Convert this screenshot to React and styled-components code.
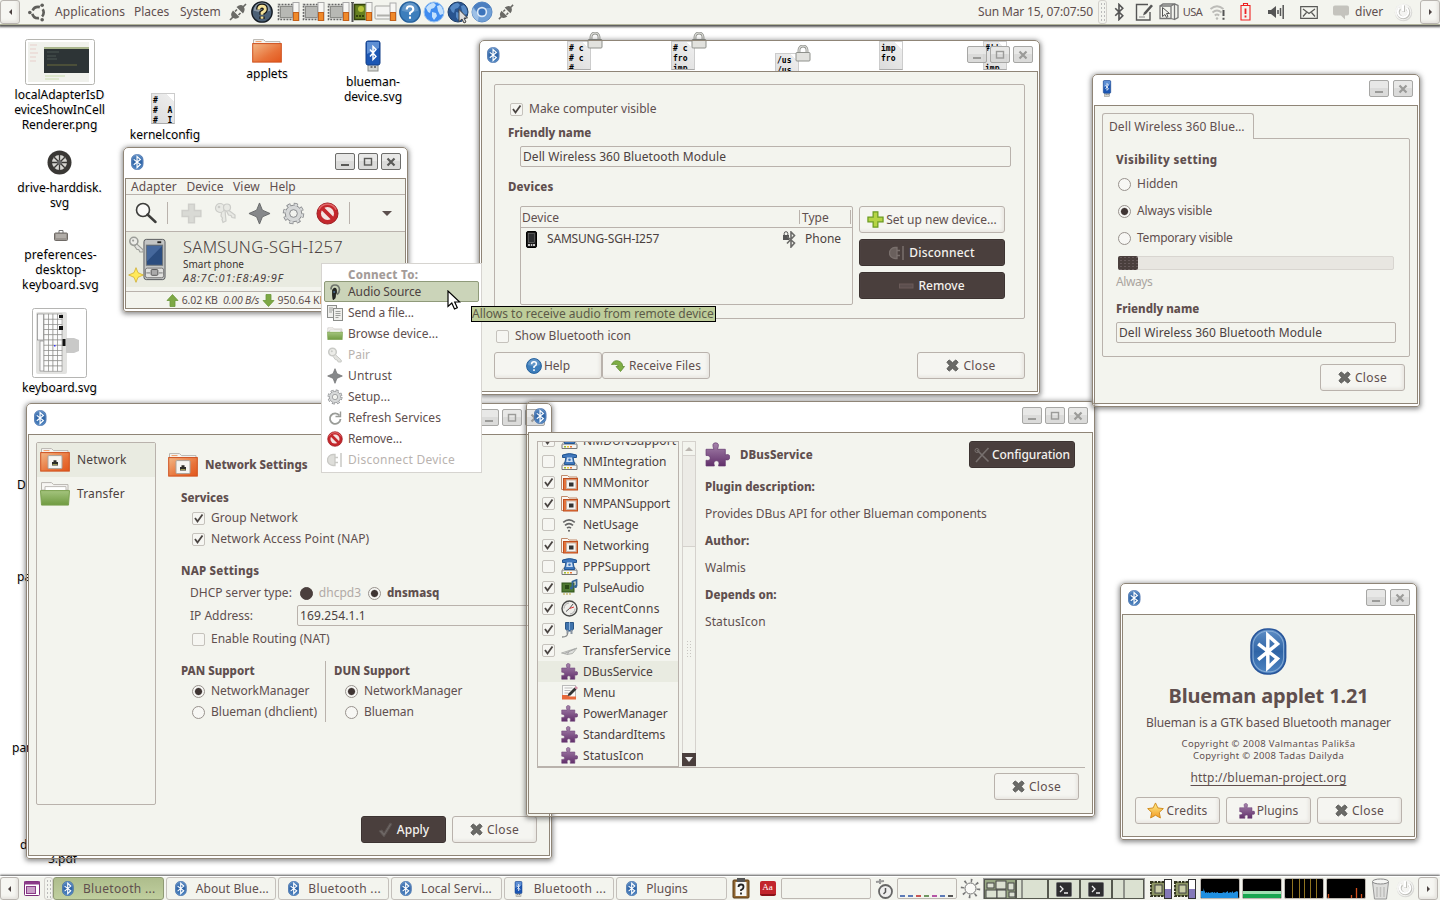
import React from 'react';
import styled, { createGlobalStyle, css } from 'styled-components';

const C = {
  bg: '#f3f4ee',
  text: '#604f4e',
  field: '#4b4140',
  line: '#b9b2ac',
  frame: '#8f8577',
  sel: '#e9ebe1',
  dark: '#4a3f3d',
};

const Global = createGlobalStyle`
  * { box-sizing: border-box; }
  html, body { margin: 0; padding: 0; background: #fff; }
  body { font: 12px/16px "Noto Sans", "Open Sans", sans-serif; color: ${C.text}; overflow: hidden; }
  svg { display: block; flex: none; }
`;

const Screen = styled.div`
  position: relative; width: 1440px; height: 900px; overflow: hidden; background: #fff;
  display: flex; flex-direction: column; justify-content: space-between;
`;
const Surface = styled.div`position: absolute; inset: 0;`;

const T = styled.span`
  white-space: pre;
  ${p => p.$ls && css`letter-spacing: ${p.$ls}px;`}
  ${p => p.$size && css`font-size: ${p.$size}px;`}
  ${p => p.$color && css`color: ${p.$color};`}
  ${p => p.$italic && css`font-style: italic;`}
`;
const B = styled(T)`font-weight: 800; font-size: 11.5px;`;

/* ---------- icons ---------- */
const RUNE = 'M7 7l10 10-5 5V2l5 5L7 17';
const Icon = ({ w = 16, h = w, vb = `0 0 ${w} ${h}`, children }) => <svg width={w} height={h} viewBox={vb}>{children}</svg>;

const BtLogo = ({ h = 16 }) => (
  <Icon w={h * 0.78} h={h} vb="0 0 36 46">
    <defs><linearGradient id="bt" x1="0" y1="0" x2="0" y2="1"><stop offset="0" stopColor="#5f8fc6" /><stop offset=".5" stopColor="#2f64a6" /><stop offset="1" stopColor="#4f86c2" /></linearGradient></defs>
    <rect x="1" y="1" width="34" height="44" rx="16" fill="url(#bt)" stroke="#28559a" strokeWidth="1.500" />
    <rect x="3" y="3" width="30" height="40" rx="14" fill="none" stroke="#86abd6" strokeWidth="1" />
    <path d="M8 15.500L27 30 17.500 39V7L27 15.500 8 31" fill="none" stroke="#fff" strokeWidth="3.400" />
  </Icon>
);
const Usb = ({ w = 10, h = 17 }) => (
  <Icon w={w} h={h} vb="0 0 16 32">
    <rect x="3" y="24" width="10" height="7" fill="#d5d6d2" stroke="#8d8f8a" />
    <path d="M5.500 27h2M9 27h2" stroke="#555" strokeWidth="1.500" />
    <rect x="1" y="1" width="14" height="24" rx="2" fill="#1c57b4" stroke="#123f87" />
    <path d="M2 2h12v6L2 14z" fill="#5e8fd4" />
    <path d="M5 9.500l6 7-3 3V6.500l3 3-6 7" fill="none" stroke="#fff" strokeWidth="1.400" />
  </Icon>
);
const Rune = ({ s = 18, color = '#555', sw = 2.2 }) => <Icon w={s} vb="0 0 24 24"><path d={RUNE} fill="none" stroke={color} strokeWidth={sw} /></Icon>;
const XMark = ({ color = '#4f4f4d' }) => (
  <Icon w={13} vb="0 0 14 14"><path d="M1 3.500L3.500 1 7 4l3.500-3L13 3.500 10 7l3 3.500L10.500 13 7 10l-3.500 3L1 10.500 4 7z" fill="#6a6a67" stroke={color} /></Icon>
);
const Check = ({ s = 13, color = '#4a4542' }) => <Icon w={s} vb="0 0 13 13"><path d="M3 6l2.500 3.500L10.500 2.500" fill="none" stroke={color} strokeWidth="1.800" /></Icon>;
const BigCheck = () => <Icon w={15} h={16}><path d="M1 9l3-1 2 3L12 1l2 1-8 13z" fill="#6d6664" stroke="#5a5250" /></Icon>;
const HelpBall = ({ s = 16, dark }) => (
  <Icon w={s} vb="0 0 16 16">
    <circle cx="8" cy="8" r="7.400" fill={dark ? '#4b6076' : '#3d7ebc'} stroke={dark ? '#151c24' : '#25609c'} />
    <path d="M2 7a6 6 0 0 1 12 0q-6 2-12 0z" fill="#fff" opacity={dark ? 0.35 : 0.18} />
    {dark && <path d="M5.600 6.200Q5.600 3.800 8 3.800T10.400 6Q10.400 7.300 8 8.600V10M8 11.300v1.800" fill="none" stroke="#151515" strokeWidth="3.800" />}
    <path d="M5.600 6.200Q5.600 3.800 8 3.800T10.400 6Q10.400 7.300 8 8.600V10M8 11.300v1.600" fill="none" stroke={dark ? '#f5e39a' : '#fff'} strokeWidth={dark ? 2 : 1.5} />
  </Icon>
);
const Plus = ({ s = 17, off }) => <Icon w={s} vb="0 0 18 18"><path d="M6.500 1h5v5.500H17v5h-5.500V17h-5v-5.500H1v-5h5.500z" fill={off ? '#d9dad5' : '#b5d445'} stroke={off ? '#cfcfcb' : '#6a9a1f'} strokeWidth="1.300" /></Icon>;
const Forbid = ({ s = 16 }) => (
  <Icon w={s} vb="0 0 24 24"><circle cx="12" cy="12" r="11" fill="#c4272c" stroke="#9b1b20" /><circle cx="12" cy="12" r="6.800" fill="#f3e4e2" /><path d="M6 6l12 12" stroke="#c4272c" strokeWidth="4" /><path d="M3 8a10 10 0 0 1 18 0" fill="none" stroke="#e2686a" strokeWidth="1.500" /></Icon>
);
const Gear = ({ s = 16 }) => (
  <Icon w={s} vb="0 0 24 24">
    <circle cx="12" cy="12" r="9.400" fill="none" stroke="#85878a" strokeWidth="3.600" strokeDasharray="4.100 3.280" />
    <circle cx="12" cy="12" r="8.600" fill="#d6d8d8" stroke="#85878a" />
    <circle cx="12" cy="12" r="9.200" fill="none" stroke="#d6d8d8" strokeWidth="2.400" strokeDasharray="2.800 4.420" strokeDashoffset="-.7" />
    <circle cx="12" cy="12" r="4" fill="#f1f2ee" stroke="#85878a" />
  </Icon>
);
const Star4 = ({ s = 16, fill = '#86888a', stroke = '#66686a' }) => <Icon w={s} vb="0 0 24 24"><path d="M12 1l3 7.500L23 12l-8 3.500L12 23l-3-7.500L1 12l8-3.500z" fill={fill} stroke={stroke} /></Icon>;
const Key = ({ s = 16, color = '#c9cac6' }) => <Icon w={s} vb="0 0 16 16"><circle cx="5.500" cy="5" r="3.800" fill="#ecece8" stroke={color} strokeWidth="1.500" /><circle cx="4.800" cy="4.300" r="1" fill={color} /><path d="M8.200 7.500l6 5.500v2h-3l-1-2-2-.5-2-3z" fill="#e3e3df" stroke={color} /></Icon>;
const Keys = () => <Icon w={22} vb="0 0 22 22"><g fill="#e8e9e4" stroke="#cbccc8" strokeWidth="1.200"><path d="M8 7l3 1 1 11-3 1.500-1-3 .5-1.500-1.500-2z" /><circle cx="6" cy="6" r="4.500" /><path d="M13 7l8 6v3l-3-.5-1-2-2.500-.5-2-4z" /><circle cx="13" cy="5.500" r="3.500" /></g><circle cx="5" cy="5" r="1.300" fill="#cbccc8" /></Icon>;
const Search = () => <Icon w={22} vb="0 0 22 22"><circle cx="8" cy="8" r="6.500" fill="#fafaf8" stroke="#3d3d3b" strokeWidth="1.600" /><path d="M12.500 12.500l8 7.500" stroke="#3d3d3b" strokeWidth="2.400" strokeLinecap="round" /></Icon>;
const Arrow = ({ down }) => <Icon w={13} h={13}><path d={down ? 'M6.500 12.500L1 6.500h3v-6h5v6h3z' : 'M6.500.5L12 6.500H9v6H4v-6H1z'} fill="#7da845" stroke="#6b983a" strokeWidth=".8" /></Icon>;
const Folder = ({ w = 30, net, green }) => (
  <Icon w={w} h={w * 0.84} vb="0 0 30 25">
    <defs><linearGradient id="of" x1="0" y1="0" x2="1" y2="1"><stop offset="0" stopColor="#f2b887" /><stop offset=".6" stopColor="#e8733a" /><stop offset="1" stopColor="#e2561c" /></linearGradient>
      <linearGradient id="gf" x1="0" y1="0" x2="0" y2="1"><stop offset="0" stopColor="#a4c47e" /><stop offset="1" stopColor="#6f9a40" /></linearGradient></defs>
    <path d="M1.500 9V1.500h10l2 2H28V9z" fill="#f7f6f3" stroke="#b9b6b0" />
    {green ? <><path d="M5 10V5.500h21V10" fill="#fff" stroke="#bdbab5" /><path d="M.5 9.500h29L28.500 24H1.500z" fill="url(#gf)" stroke="#7ba04f" /></>
      : <><path d="M3.500 3.500h6" stroke="#ee9b64" /><rect x=".7" y="5.500" width="28.600" height="18.500" fill="url(#of)" stroke="#cf4f1c" /></>}
    {net && <><rect x="8" y="8.500" width="14" height="13" rx="1" fill="#f6f5f2" stroke="#a9a49d" /><path d="M12 18.500v-3.500h1.500v-1.800h3v1.800h1.500v3.500z" fill="#2d2c28" /><path d="M12.500 17.500h5" stroke="#a4a05a" /></>}
  </Icon>
);
const Puzzle = ({ s = 17 }) => (
  <Icon w={s} vb="0 0 24 24">
    <defs><linearGradient id="pz" x1="0" y1="0" x2="0" y2="1"><stop offset="0" stopColor="#a684ac" /><stop offset="1" stopColor="#62306b" /></linearGradient></defs>
    <path d="M1 7h7.500Q6 .8 10.200.8T12 7h7.500v5.500q4.300-1.500 4.300 2T19.500 17v6H13q1.500-5-2-5T9 23H1v-5.500q4 .8 4-2T1 13z" fill="url(#pz)" stroke="#653970" strokeWidth=".7" />
  </Icon>
);
const Star = () => <Icon w={17} vb="0 0 18 18"><defs><linearGradient id="st" x1="0" y1="0" x2="0" y2="1"><stop offset="0" stopColor="#fff08a" /><stop offset="1" stopColor="#f29a24" /></linearGradient></defs><path d="M9 1l2.500 5.300 5.800.7-4.300 4 1.200 5.900L9 14l-5.200 2.900L5 11 .7 7l5.800-.7z" fill="url(#st)" stroke="#d08a1c" /></Icon>;
const Phone = ({ w = 24, h = 44 }) => (
  <Icon w={w} h={h} vb="0 0 24 44">
    <rect x="1" y="1" width="22" height="42" rx="2.500" fill="#c3c5c4" stroke="#55585a" />
    <rect x="3.500" y="7" width="17" height="21" fill="#2b4d7f" stroke="#6f7577" /><path d="M4 8h16L4 24z" fill="#45689c" />
    <rect x="15" y="3" width="4" height="2" fill="#222" />
    <rect x="2.500" y="31" width="19" height="10" rx="2" fill="#dfe0de" stroke="#777" /><rect x="8.500" y="32.500" width="7" height="6" rx="1" fill="#aaa" stroke="#555" />
    <path d="M3.500 36h4M16.500 36h4" stroke="#777" />
  </Icon>
);
const TinyPhone = () => <Icon w={11} h={17}><rect x=".5" y=".5" width="10" height="16" rx="1.500" fill="#1a1a1a" stroke="#000" /><rect x="2.500" y="2.500" width="6" height="9" fill="#2b2d2f" stroke="#777" strokeWidth=".6" /><path d="M2 14h2M4.800 14h1.500M7 14h2" stroke="#fff" strokeWidth="1.500" /></Icon>;
const LockedBt = () => <Icon w={13} h={17}><rect x="0" y="4" width="6" height="5" fill="#555" /><path d="M1.200 4V2.500a1.800 1.800 0 0 1 3.600 0V4" fill="none" stroke="#555" /><path d="M4 5.500l7.500 6.500L8 16V1l3.500 3.500L4 12.500" fill="none" stroke="#6a6a68" strokeWidth="1.600" /></Icon>;
const Plug = ({ s = 18, color = '#6a6a66' }) => (
  <Icon w={s} vb="0 0 18 18">
    <path d="M1 17l4-4M13 5l4-4M8 6.500L6 8.500M11.500 10L9.500 12" stroke={color} strokeWidth="1.700" />
    <path d="M4 7.500l6.500 6.500Q6.500 17 3.500 14.500T4 7.500zM7.500 4l6.500 6.500q3-4 .500-7T7.500 4z" fill={color} />
  </Icon>
);
const Disc = ({ color = '#c9c9c5', fill = '#dededa' }) => <Icon w={16}><path d="M8 2.500H6a5.500 5.500 0 0 0 0 11h2zM8 5.500h3M8 10.500h3M0 8h1" fill={fill} stroke={color} strokeWidth="1.300" /><path d="M14 1v14" stroke={color} strokeWidth="1.500" /></Icon>;
const Curl = () => <Icon w={14} h={14}><path d="M.5 5.500Q3 .5 7.500 2t4 5.500h2L9.500 12.500 5 7.500h2.500Q6.500 4.500.5 5.500z" fill="#7fae45" stroke="#5c8a2c" strokeWidth=".8" /></Icon>;
const Refresh = () => <Icon w={16}><path d="M12.500 5.500A5.300 5.300 0 1 0 13.500 9" fill="none" stroke="#9a9c98" strokeWidth="1.800" /><path d="M13.500 1.500v5h-5" fill="none" stroke="#9a9c98" strokeWidth="1.400" /></Icon>;
const Docs = () => <Icon w={16}><g fill="#efefec" stroke="#8b8d8a"><rect x=".5" y=".5" width="9" height="12" /><rect x="6.500" y="3.500" width="9" height="12" /></g><path d="M2 3h4M2 5h4M2 7h3M8.500 6.500h5M8.500 8.500h5M8.500 10.500h5M8.500 12.500h3" stroke="#9d9f9b" /></Icon>;
const Headset = () => <Icon w={16}><path d="M4 5.500Q4 1 8 1t4.500 4.500q0 3-2.500 5" fill="none" stroke="#6f756c" strokeWidth="1.700" /><path d="M5.500 6q1.500-3 3.500-1.500 1.500 3.500-.5 6.500 0 4.500-2.500 4.500L5.500 11 5.500 6z" fill="#252a26" stroke="#111" strokeWidth=".7" /><circle cx="7.200" cy="8" r="1" fill="#4b6f94" /></Icon>;
const Tools = () => <Icon w={16}><path d="M3 3l11.500 11.500M14.500 1L8.500 7.500 2 15" stroke="#77706e" strokeWidth="1.600" fill="none" /><circle cx="3" cy="3.500" r="2" fill="none" stroke="#77706e" /></Icon>;
const Minus = () => <Icon w={15} h={6}><rect x=".5" y="1" width="13.500" height="4" fill="#5c4f4e" stroke="#6a5b59" /></Icon>;
const Modem = () => (
  <Icon w={17} h={17}>
    <path d="M1 12.500h15v4H1z" fill="#f5f5f2" stroke="#777" /><path d="M1 12.500L3 9.500h11l2 3" fill="#e4e6e4" stroke="#888" strokeWidth=".8" />
    <path d="M1.500 4.500V2Q8.500-.8 15.500 2v2.500h-3.200V6l1.400 5.500H3.300L4.700 6V4.500z" fill="#3f78bd" stroke="#245690" /><path d="M6 4.500h5l.8 4.500H5.200z" fill="#cfe0f3" /><circle cx="8.500" cy="6.800" r="1.300" fill="#3f78bd" />
    <path d="M3 14.700h2" stroke="#9b3" strokeWidth="1.600" /><path d="M6 14.700h2" stroke="#ec3" strokeWidth="1.600" /><path d="M9 14.700h2" stroke="#e73" strokeWidth="1.600" />
  </Icon>
);
const NetFolder = () => (
  <Icon w={17} h={17}>
    <path d="M.5 15.500V1.500h6l1.500 1.500h8v12.500z" fill="#faf6f1" stroke="#c08b6c" />
    <rect x="2.500" y="4.500" width="14" height="11.500" fill="#e4743c" stroke="#c04d1c" />
    <path d="M2.500 4.500v11.500" stroke="#c04d1c" /><rect x="5.500" y="6" width="9.500" height="8.500" fill="#f5f3f0" stroke="#c9b3a5" /><rect x="8" y="8.500" width="4.500" height="4" fill="#333" />
  </Icon>
);
const Wifi = ({ s = 16, color = '#666', warn }) => <Icon w={s} vb="0 0 18 18"><g fill="none" stroke={color} strokeWidth="1.800"><path d="M2.500 6Q9 .5 15.500 6M4.500 9.500Q9 5.500 13.500 9.500M6.800 12.500Q9 10.500 11.200 12.500" /></g><circle cx="9" cy="15.500" r="1.200" fill={color} />{warn && <path d="M15.500 7v6M15.500 14.800v2" stroke="#555" strokeWidth="2" />}</Icon>;
const SoundCard = () => <Icon w={17} h={17}><rect x="1" y="4" width="12" height="9" fill="#4f7a32" stroke="#2f5218" /><rect x="4" y="6" width="4" height="4" fill="#294a16" /><path d="M3 14v2M6 14v2M9 14v2" stroke="#b8a23a" /><path d="M11.500 9V2.500L15.500 1v6" fill="none" stroke="#356596" strokeWidth="1.800" /><circle cx="10.500" cy="9" r="1.600" fill="#356596" /><circle cx="14.500" cy="7.500" r="1.600" fill="#356596" /></Icon>;
const Clock = () => <Icon w={17} h={17}><circle cx="8.500" cy="8.500" r="7.500" fill="#eeeeea" stroke="#4b4b49" strokeWidth="1.400" /><path d="M3 8.500a5.500 5.500 0 0 1 5-5.500M14 8.500a5.500 5.500 0 0 1-5 5.500" stroke="#aaa" fill="none" /><path d="M8.500 8.500L12 4M5 11.500l3.500-3" fill="none" stroke="#555" /><path d="M8.500 8.500L13 7" stroke="#d33" /></Icon>;
const Serial = () => <Icon w={17} h={17}><path d="M4.500 1.500h8v6.500l-2 2h-4l-2-2z" fill="#3f73ac" stroke="#2b5787" /><path d="M8.500 1v8" stroke="#8db3dc" /><path d="M6.500 9v3.500M10.500 9v4" stroke="#8b95a2" strokeWidth="2" /><path d="M6.500 12q.5 4-5.500 4" fill="none" stroke="#8a8c8c" strokeWidth="1.300" /></Icon>;
const Plane = () => <Icon w={17} h={17}><path d="M.5 11L16 6l-4.500 5.500-5 1z" fill="#dfe0dd" stroke="#a2a4a1" strokeWidth=".8" /><path d="M3.500 11.500L14 7M6.500 12.500l1-2.500" stroke="#999" strokeWidth=".8" /></Icon>;
const MenuIcon = () => <Icon w={17} h={17}><rect x="1.500" y="1.500" width="13" height="13" fill="#fafaf8" stroke="#bbb" /><path d="M3.500 4h8M3.500 6.500h6M3.500 9h4" stroke="#bbb" /><path d="M1 15.500v-4.500h5l3 1.500h6v3z" fill="#e8693a" /><path d="M6.500 12l1-2.500 6-6 2 2-6 6z" fill="#333" /><path d="M13.500 3.500l1.500-1.500 2 2-1.500 1.500z" fill="#d58fa8" /></Icon>;
const Cursor = () => <Icon w={14} h={21}><path d="M1 1v15.500l3.800-3.500 2.700 6 2.800-1.200-2.600-5.800h5z" fill="#fff" stroke="#000" strokeWidth="1.200" /></Icon>;
const UbuntuMark = () => <Icon w={19} vb="0 0 20 20"><circle cx="10.500" cy="10" r="6" fill="none" stroke="#5f5f5b" strokeWidth="2.800" strokeDasharray="9 3.566" strokeDashoffset="4.500" /><g fill="#5f5f5b"><circle cx="1.900" cy="10" r="1.900" /><circle cx="14.900" cy="2.400" r="1.900" /><circle cx="14.900" cy="17.600" r="1.900" /></g></Icon>;
const Chip = ({ green }) => (
  <Icon w={23} h={20}>
    {green ? <><path d="M1 0h3M2.500 0v20" stroke="#555" strokeWidth="2" /><rect x="4.500" y="2.500" width="15" height="15" fill="#66801f" stroke="#33420c" strokeWidth="1.500" /><circle cx="11" cy="7" r="3" fill="#b7c43a" /><path d="M6 14h9" stroke="#33420c" strokeWidth="2" strokeDasharray="2 1" /></>
      : <><rect x="1.500" y="2.500" width="16" height="15" fill="#d3d4d0" stroke="#666" strokeWidth="1.600" strokeDasharray="1.800 1.300" /><rect x="3.500" y="4.500" width="12" height="11" fill="#b7b8b4" stroke="#8b8c88" /></>}
    <rect x="16" y="0.500" width="6" height="18" fill="#f7f7f4" stroke="#aaa" /><rect x="16.500" y="10.500" width="5" height="8" fill="#ef8a2a" stroke="#c4611a" />
  </Icon>
);
const Drive = () => <Icon w={23} h={20}><rect x="1" y="4" width="17" height="13" rx="1" fill="#f4f4f2" stroke="#a5a6a2" /><path d="M3 13.500h13" stroke="#b0b0ac" strokeWidth="2" /><rect x="16" y="1" width="6" height="17.500" fill="#f7f7f4" stroke="#aaa" /><rect x="16.500" y="10.500" width="5" height="8" fill="#ef8a2a" stroke="#c4611a" /></Icon>;
const Globe = ({ a, b, c, cursor }) => <Icon w={23} h={23}><circle cx="11" cy="11" r="10" fill={a} stroke={c} /><path d="M3 7q3-5 8-5l2 2-2 3-3 1-1 4-2-1zM9 11l4 1 1 3-3 4-2-3zM14 5l3-1q4 4 3 9l-3 1-2-4z" fill={b} opacity=".85" />{cursor && <path d="M12 8.500v12l3-2.500 2 4 2-1-2-4h3.500z" fill="#ddd" stroke="#444" />}</Icon>;
const Chromium = () => <Icon w={22} h={22}><circle cx="11" cy="11" r="10" fill="#6f9fd6" stroke="#5a8ac4" /><path d="M2.500 6a10 10 0 0 1 17.500 1H11L7 12z" fill="#4c7fc0" /><path d="M2 7l6 7-1 6A10 10 0 0 1 2 7z" fill="#9dc0e6" /><circle cx="11" cy="11" r="4.400" fill="#3c74bb" stroke="#dce9f6" strokeWidth="1.600" /></Icon>;
const NoteIcon = () => <Icon w={19} h={18}><path d="M15 9v8H1.500V1.500H13" fill="none" stroke="#555" strokeWidth="1.400" /><path d="M8 12.500l1-3 7-8 2 1.500-7 8z" fill="#555" /><path d="M4 14h6" stroke="#888" /></Icon>;
const CubeIcon = () => <Icon w={20} h={18}><path d="M1 3h11v12.500H1zM12 3l3.500-2v15.500l-3.500-1M1 3l3-2h11.500l3.500 1.500v12l-3.500 2" fill="none" stroke="#777" strokeWidth="1.300" /><path d="M3.500 4.500v9l2.500-2 1.500 3 1.500-1-1.500-3h3z" fill="#f3f4ee" stroke="#555" /></Icon>;
const Battery = () => <Icon w={11} h={18}><path d="M3.500 2.500v-2h4v2M1 2.500h9v14.500H1z" fill="none" stroke="#ee2222" strokeWidth="1.100" /><path d="M5.500 5.500v5.500M5.500 12.500v2" stroke="#ee2222" strokeWidth="1.800" /></Icon>;
const Volume = () => <Icon w={17} h={16}><path d="M0 6h3l5-4v12l-5-4H0z" fill="#555" /><path d="M10 6v4M12.500 4v8M15.200 1v14" stroke="#555" strokeWidth="1.500" /></Icon>;
const Mail = () => <Icon w={18} h={13}><path d="M.7.7h16.600v11.600H.7zM3 3l6 4.500L15 3M3 10.500l3.500-4M15 10.500l-3.500-4" fill="none" stroke="#5a5a57" strokeWidth="1.200" /></Icon>;
const Chat = () => <Icon w={16} h={15}><path d="M2 .5h12q2 0 2 2v6q0 2-2 2h-2v4l-4-4H2q-2 0-2-2v-6q0-2 2-2z" fill="#c4c3bd" /></Icon>;
const Power = () => <Icon w={19} h={19}><circle cx="9.500" cy="9.500" r="8.800" fill="#d9d9d6" /><circle cx="9" cy="9" r="8.300" fill="#f4f4f2" /><path d="M6 5.500a5.300 5.300 0 1 0 7 0M9.500 2.500v6.500" fill="none" stroke="#c0c0bc" strokeWidth="3" /><path d="M5.500 5a5.300 5.300 0 1 0 7 0M9 2v6.500" fill="none" stroke="#fff" strokeWidth="2" /></Icon>;
const Window = () => <Icon w={16} h={15}><rect x=".5" y=".5" width="15" height="14" rx="1" fill="#fff" stroke="#7a2d78" /><path d="M0 2h16" stroke="#8b3a89" strokeWidth="3" /><rect x="2.500" y="5.500" width="9" height="7" fill="#c9a0c8" stroke="#8b3a89" /></Icon>;

/* ---------- panel ---------- */
const Panel = styled.div`
  position: relative; z-index: 1; display: flex; align-items: center; height: ${p => (p.$bottom ? 24 : 25)}px; background: ${C.bg};
  ${p => (p.$bottom ? 'border-top: 1px solid #fff; box-shadow: 0 -1px 2px #555;' : 'border-bottom: 1px solid #b3b59c; box-shadow: 0 1px 2px 1px #555;')}
`;
const Cell = styled.div`width: ${p => p.$w}px; height: 100%; display: flex; align-items: center; justify-content: ${p => (p.$left ? 'flex-start' : 'center')}; flex: none;`;
const Spacer = styled.div`flex: 1;`;
const HideButton = styled.div`
  width: ${p => p.$w || 20}px; height: 100%; border: 1px solid #b9b5b0; border-radius: 3px; background: #f6f6f2; flex: none;
  display: flex; align-items: center; justify-content: center; box-shadow: inset -2px -2px 3px #e6e4df;
`;
const Hide = ({ right, w }) => <HideButton $w={w}><Icon w={5} h={6}><path d={right ? 'M1 0v6l3-3z' : 'M4 0v6L1 3z'} fill="#4b4140" /></Icon></HideButton>;
const Handle = styled.div`
  width: 9px; height: 100%; border: 1px solid #d3d1cc; border-radius: 3px; flex: none;
  background: radial-gradient(circle, #bbb 28%, transparent 32%) 1px 1px / 3px 4px;
`;
const TaskList = styled.div`display: flex; gap: 2px; width: 674px; height: 100%; flex: none;`;
const Task = styled.div`
  flex: 1; display: flex; align-items: center; padding-left: 7px; gap: 8px; border: 1px solid ${p => (p.$on ? '#8f9a74' : '#c4c0bb')}; border-radius: 3px;
  background: ${p => (p.$on ? 'linear-gradient(#aebd8c, #c0cf9f)' : '#f3f4ee')};
`;
const TaskIcon = styled.div`width: 14px; display: flex; justify-content: center;`;
const PanelBox = styled.div`
  width: ${p => p.$w}px; height: 21px; border: 1px solid #bdb8b2; border-radius: 2px; flex: none; margin-right: ${p => p.$mr || 0}px;
  display: flex; align-items: flex-end; overflow: hidden; background: ${p => p.$bg || C.bg};
`;
const Workspaces = styled.div`width: 162px; height: 21px; display: grid; grid-template-columns: repeat(5, 1fr); border: 1px solid #999; background: #dbe0d0; flex: none;`;
const Workspace = styled.div`background: ${p => (p.$on ? '#98a884' : '#dbe1d1')}; border: 1px solid #55584e; display: flex; align-items: center; justify-content: center;`;
const Terminal = () => <Icon w={16} h={15}><rect x=".5" y=".5" width="15" height="14" rx="1" fill="#2d2d2f" stroke="#6e6e70" /><path d="M4 4l3 3-3 3M8 11h4" stroke="#eee" fill="none" strokeWidth="1.300" /></Icon>;
const ChipMeter = () => <Icon w={24} h={20}><rect x="2" y="3" width="15" height="14" fill="#8b9462" stroke="#33361f" strokeWidth="2" strokeDasharray="2.500 1" /><rect x="6" y="6" width="7" height="8" fill="#c9cda6" stroke="#444" /><rect x="15.500" y=".5" width="7" height="19" fill="#fff" stroke="#333" /><rect x="16" y="10" width="6" height="9" fill="#8478b8" /></Icon>;
const DictCover = styled.div`
  width: 16px; height: 15px; background: #c2242c; border-bottom: 2px solid #8a1118; border-radius: 2px; color: #fff;
  font: 9px/13px "Liberation Serif", serif; text-align: center;
`;

const TASKS = [['Bluetooth ...', 0.32], ['About Blue...', 0.1], ['Bluetooth ...', 0.32], ['Local Servi...', 0.1], ['Bluetooth ...', 0.32, 1], ['Plugins', 0]];

function TopPanel() {
  return (
    <Panel>
      <Hide w={20} />
      <Cell $w={35}><UbuntuMark /></Cell>
      <Cell $w={79} $left><T $ls={0.1}>Applications</T></Cell>
      <Cell $w={46} $left><T>Places</T></Cell>
      <Cell $w={46} $left><T>System</T></Cell>
      <Cell $w={23}><Plug /></Cell>
      <Cell $w={26}><HelpBall s={22} dark /></Cell>
      <Cell $w={26}><Chip /></Cell>
      <Cell $w={25}><Chip /></Cell>
      <Cell $w={24}><Chip /></Cell>
      <Cell $w={23}><Chip green /></Cell>
      <Cell $w={25}><Drive /></Cell>
      <Cell $w={24}><HelpBall s={22} /></Cell>
      <Cell $w={24}><Globe a="#3f8cf0" b="#d9efff" c="#9cc4ee" /></Cell>
      <Cell $w={24}><Globe a="#28548f" b="#5e93cf" c="#1d3d68" cursor /></Cell>
      <Cell $w={24}><Chromium /></Cell>
      <Cell $w={23}><Plug s={16} /></Cell>
      <Spacer />
      <Cell $w={120} $left><T $ls={-0.15}>Sun Mar 15, 07:07:50</T></Cell>
      <Handle />
      <Cell $w={24}><Rune s={18} /></Cell>
      <Cell $w={26}><NoteIcon /></Cell>
      <Cell $w={24}><CubeIcon /></Cell>
      <Cell $w={23}><T $size={11} $ls={-0.6}>USA</T></Cell>
      <Cell $w={26}><Wifi s={18} color="#bcbcb8" warn /></Cell>
      <Cell $w={30}><Battery /></Cell>
      <Cell $w={32}><Volume /></Cell>
      <Cell $w={34}><Mail /></Cell>
      <Cell $w={29}><Chat /></Cell>
      <Cell $w={32} $left><T>diver</T></Cell>
      <Cell $w={33}><Power /></Cell>
      <Hide right w={20} />
    </Panel>
  );
}

function BottomPanel() {
  return (
    <Panel $bottom>
      <Hide w={19} />
      <Cell $w={25}><Window /></Cell>
      <Handle />
      <TaskList>
        {TASKS.map(([label, ls, usb], i) => (
          <Task key={i} $on={i === 0}><TaskIcon>{usb ? <Usb w={9} h={16} /> : <BtLogo h={15} />}</TaskIcon><T $ls={ls}>{label}</T></Task>
        ))}
      </TaskList>
      <Cell $w={27}><Icon w={18} h={21}><rect x="1" y="2" width="16" height="18" rx="1" fill="#8f6530" stroke="#5b3d16" /><rect x="3.500" y="4" width="11" height="14" fill="#f7f7f4" /><rect x="5" y="0" width="8" height="4" fill="#555" /><path d="M6.500 9Q6.500 6.500 9 6.500t2.500 2.200T9 12v1M9 14.500v2" fill="none" stroke="#222" strokeWidth="1.800" /></Icon></Cell>
      <Cell $w={27}><DictCover>Aa</DictCover></Cell>
      <PanelBox $w={90} />
      <Cell $w={26}><Icon w={18} h={20}><path d="M1 3l8-1M5 0v5" stroke="#999" strokeWidth="2" /><circle cx="10.500" cy="12.500" r="6.500" fill="#eee" stroke="#666" strokeWidth="1.800" /><path d="M10.500 9v4l-2 2" fill="none" stroke="#555" strokeWidth="1.500" /></Icon></Cell>
      <PanelBox $w={60}><Icon w={58} h={5}>{['#2a52a5', '#2a52a5', '#b22', '#473', '#a1218c', '#2a52a5', '#222'].map((c, i) => <path key={i} d={`M${2 + i * 8} 3h5`} stroke={c} strokeWidth="1.500" />)}</Icon></PanelBox>
      <Cell $w={26}><Icon w={21} h={21}><circle cx="10.500" cy="10.500" r="8" fill="none" stroke="#777" strokeWidth="3.500" strokeDasharray="1.600 4.680" /><circle cx="10.500" cy="10.500" r="5.500" fill="#fafaf7" stroke="#777" /></Icon></Cell>
      <Workspaces>
        <Workspace $on><Icon w={30} h={18}><g fill="#dbe1d1" stroke="#444"><rect x="2" y="3" width="7" height="5" /><rect x="11" y="1" width="10" height="8" /><rect x="1" y="10" width="11" height="8" /><rect x="12" y="10" width="9" height="8" /><rect x="23" y="3" width="6" height="7" /><rect x="24" y="12" width="6" height="5" /></g></Icon></Workspace>
        <Workspace><Icon w={30} h={18}><path d="M5 0v18" stroke="#444" /></Icon></Workspace>
        <Workspace><Terminal /></Workspace><Workspace><Terminal /></Workspace>
        <Workspace><Icon w={30} h={18}><path d="M11 0v18" stroke="#444" /></Icon></Workspace>
      </Workspaces>
      <Cell $w={55}><ChipMeter /><ChipMeter /></Cell>
      <PanelBox $w={40} $mr={2} $bg="#000"><Icon w={38} h={19}><path d="M0 19v-7h2v-3l1 4 1-2v3l2-1v1l2-1v1l4-1v1l2-1v1l3-1v1h4l2-1 1 1 3-2v2l3-1v1l2-2v2l2-1 2-1 1 1v6z" fill="#1f8fe0" /></Icon></PanelBox>
      <PanelBox $w={40} $mr={2} $bg="#000"><Icon w={38} h={19}><rect y="12" width="38" height="3" fill="#9fe0b2" /><rect y="15" width="38" height="4" fill="#18a650" /></Icon></PanelBox>
      <PanelBox $w={40} $mr={2} $bg="#000"><Icon w={38} h={19}><path d="M7.500 0v19M14.500 0v19M19.500 0v19M25.500 0v19M31.500 0v19" stroke="#8f7420" /></Icon></PanelBox>
      <PanelBox $w={40} $mr={2} $bg="#000"><Icon w={38} h={19}><path d="M1.500 19v-4M24.500 19v-3M29.500 19V9M34.500 19v-4" stroke="#d4501c" strokeWidth="1.300" /></Icon></PanelBox>
      <Cell $w={25}><Icon w={19} h={22}><path d="M1.500 4l2 17h12l2-17z" fill="#dededc" stroke="#999" /><ellipse cx="9.500" cy="3.500" rx="8" ry="2.500" fill="#f5f5f3" stroke="#888" /><path d="M6 9v10M9.500 9v10M13 9v10" stroke="#c0c0bd" strokeWidth="1.500" /></Icon></Cell>
      <Cell $w={25}><Power /></Cell>
      <Hide right w={20} />
    </Panel>
  );
}

/* ---------- windows ---------- */
const Frame = styled.section`
  position: absolute; left: ${p => p.$x}px; top: ${p => p.$y}px; width: ${p => p.$w}px; height: ${p => p.$h}px;
  border: 1px solid ${C.frame}; border-radius: 5px 5px 3px 3px; padding: 0 1px 2px; display: flex; flex-direction: column;
  box-shadow: 0 1px 5px 1px rgba(60, 60, 60, .6);
`;
const TitleBar = styled.header`height: 30px; flex: none; display: flex; align-items: center; padding: 0 5px 3px 6px; gap: ${p => p.$gap}px;`;
const TitleIcon = styled.div`width: 13px; display: flex; justify-content: center; margin-right: auto;`;
const TitleButton = styled.div`
  width: 20px; height: 17px; border: 1px solid ${p => (p.$active ? '#6d6d6b' : '#a7a7a5')}; border-radius: 2px; background: rgba(214, 214, 213, .88);
  box-shadow: inset 0 7px 0 rgba(235, 235, 234, .8); display: flex; align-items: center; justify-content: center;
`;
const Body = styled.div`flex: 1; border: 1px solid ${C.frame}; background: ${C.bg}; display: flex; flex-direction: column; min-height: 0;`;

function Win({ x, y, w, h, icon, max, active, children }) {
  const c = active ? '#5a5a58' : '#9b9b99';
  return (
    <Frame $x={x} $y={y} $w={w} $h={h}>
      <TitleBar $gap={max ? 3 : 4}>
        <TitleIcon>{icon || <BtLogo />}</TitleIcon>
        <TitleButton $active={active}><Icon w={10} h={10}><path d="M1 8h8" stroke={c} strokeWidth="2" /></Icon></TitleButton>
        {max && <TitleButton $active={active}><Icon w={10} h={10}><rect x="1.500" y="1.500" width="7" height="6.500" fill="none" stroke={c} strokeWidth="1.400" /></Icon></TitleButton>}
        <TitleButton $active={active}><Icon w={10} h={10}><path d="M1.500 1.500l7 7M8.500 1.500l-7 7" stroke={c} strokeWidth="2.200" /></Icon></TitleButton>
      </TitleBar>
      <Body>{children}</Body>
    </Frame>
  );
}

/* ---------- controls ---------- */
const Line = styled.div`
  display: flex; align-items: center; flex: none; height: ${p => p.$h || 20}px; margin-top: ${p => p.$top || 0}px;
  padding-left: ${p => p.$in || 0}px; gap: ${p => p.$gap || 0}px;
`;
const CheckBox = styled.span`width: 13px; height: 13px; border: 1px solid #c5c2bc; border-radius: 2px; flex: none; background: #f6f6f2; display: flex; align-items: center; justify-content: center;`;
const RadioDot = styled.span`
  width: 13px; height: 13px; border-radius: 50%; flex: none; border: 1px solid ${p => (p.$dark ? C.dark : '#98928d')};
  background: ${p => (p.$dark ? C.dark : p.$on ? 'radial-gradient(circle at 50% 50%, #3f3533 3px, #f7f7f4 4.2px)' : '#f7f7f4')};
`;
const Option = styled.label`display: flex; align-items: center; gap: 6px;`;
const Ck = ({ on, children, ls }) => <Option><CheckBox>{on && <Check />}</CheckBox><T $ls={ls}>{children}</T></Option>;
const Rd = ({ on, dark, children, ls }) => <Option><RadioDot $on={on} $dark={dark} /><T $ls={ls} $color={dark && '#b1aaa6'}>{children}</T></Option>;
const Entry = styled.div`
  width: ${p => p.$w}px; height: 21px; border: 1px solid ${C.line}; border-radius: 2px; padding-left: 2px; line-height: 19px; color: ${C.field};
  background: ${C.bg}; flex: none; letter-spacing: ${p => p.$ls || 0.08}px; white-space: nowrap;
`;
const Button = styled.button`
  width: ${p => p.$w}px; height: 27px; padding: 0; display: flex; align-items: center; justify-content: center; gap: ${p => p.$gap ?? 4}px; flex: none; font: inherit;
  border: 1px solid ${p => (p.$dark ? '#3c3331' : '#b9b2ac')}; border-radius: 3px; color: ${p => (p.$dark ? '#f4f2ee' : C.text)}; white-space: nowrap;
  background: ${p => (p.$dark ? C.dark : '#f5f5f1')}; box-shadow: ${p => (p.$dark ? 'inset 0 0 1px #6a5d5a' : 'inset -2px -2px 3px #e9e7e2')};
  ${p => p.$dark && 'font-weight: 500;'}
`;
const ButtonRow = styled.div`display: flex; flex: none; margin: ${p => p.$m}; gap: ${p => p.$gap || 0}px; justify-content: flex-end;`;
const CloseButton = ({ w = 85 }) => <Button $w={w} $gap={4}><XMark /><T $ls={0.35}>Close</T></Button>;

/* ---------- adapter preferences ---------- */
const Group = styled.div`width: 531px; height: 235px; margin: 12px 0 0 12px; border: 1px solid ${C.line}; border-radius: 2px; flex: none; display: flex; flex-direction: column; padding-top: 14px;`;
const Indent = styled.div`padding-left: ${p => p.$in}px; margin-top: ${p => p.$top}px; display: flex; gap: 6px; flex: none;`;
const DeviceTable = styled.div`width: 333px; height: 99px; border: 1px solid ${C.line}; border-radius: 2px;`;
const TableHead = styled.div`height: 21px; border-bottom: 1px solid ${C.line}; display: flex; align-items: center;`;
const HeadCell = styled.div`width: ${p => p.$w}px; border-right: 1px solid ${C.line}; line-height: 13px; padding: 1px 0 0 1px; margin-right: 1px;`;
const TableRow = styled.div`height: 22px; display: grid; grid-template-columns: 26px 236px 22px auto; align-items: center; color: ${C.field};`;
const IconPad = styled.div`padding-left: 5px;`;
const Stack = styled.div`display: flex; flex-direction: column; gap: 6px;`;
const SplitRow = styled.div`display: flex; margin: 6px 12px 0 12px; gap: 0; flex: none;`;

function AdapterWindow() {
  return (
    <Win x={479} y={40} w={561} h={355} max>
      <Group>
        <Line $in={15}><Ck on>Make computer visible</Ck></Line>
        <Line $in={13} $top={4}><B>Friendly name</B></Line>
        <Indent $in={25} $top={3}><Entry $w={491}>Dell Wireless 360 Bluetooth Module</Entry></Indent>
        <Line $in={13} $top={10}><B $ls={0.15}>Devices</B></Line>
        <Indent $in={25} $top={9}>
          <DeviceTable>
            <TableHead><HeadCell $w={279}>Device</HeadCell><HeadCell $w={50}>Type</HeadCell></TableHead>
            <TableRow><IconPad><TinyPhone /></IconPad><T $ls={-0.18}>SAMSUNG-SGH-I257</T><LockedBt /><T>Phone</T></TableRow>
          </DeviceTable>
          <Stack>
            <Button $w={146} $gap={2}><Plus />Set up new device...</Button>
            <Button $w={146} $dark><Disc color="#7a706d" fill="#6a605d" /><T $ls={0.2}>Disconnect</T></Button>
            <Button $w={146} $dark><Minus /><T>Remove</T></Button>
          </Stack>
        </Indent>
      </Group>
      <Line $in={14} $top={7}><Ck>Show Bluetooth icon</Ck></Line>
      <SplitRow>
        <Button $w={108} $gap={2}><HelpBall /><T>Help</T></Button>
        <Button $w={108}><Curl /><T $ls={0.1}>Receive Files</T></Button>
        <Spacer />
        <CloseButton w={108} />
      </SplitRow>
    </Win>
  );
}

/* ---------- local adapter ---------- */
const Tab = styled.div`width: 152px; height: 26px; margin: 7px 0 -1px 7px; position: relative; z-index: 1; border: 1px solid ${C.line}; border-bottom: 0; border-radius: 3px 3px 0 0; background: ${C.bg}; padding: 5px 0 0 6px; flex: none;`;
const TabPage = styled.div`width: 308px; height: 219px; margin-left: 7px; border: 1px solid ${C.line}; border-radius: 0 2px 2px 2px; padding: 11px 0 0 13px; display: flex; flex-direction: column; flex: none;`;
const Slider = styled.div`width: 276px; height: 14px; margin: 8px 0 0 2px; border: 1px solid #d8d5d0; border-radius: 2px; background: #e8e6e1; flex: none;`;
const SliderFill = styled.div`width: 20px; height: 14px; margin: -1px; border-radius: 2px; background: radial-gradient(circle, #66595a 25%, transparent 30%) 1px 3px / 4px 3px, ${C.dark};`;

function LocalWindow() {
  return (
    <Win x={1092} y={74} w={328} h={333} icon={<Usb />}>
      <Tab><T $ls={0.1}>Dell Wireless 360 Blue…</T></Tab>
      <TabPage>
        <Line><B $ls={0.35}>Visibility setting</B></Line>
        <Line $in={2} $top={4}><Rd>Hidden</Rd></Line>
        <Line $in={2} $top={7}><Rd on ls={-0.15}>Always visible</Rd></Line>
        <Line $in={2} $top={7}><Rd ls={-0.22}>Temporary visible</Rd></Line>
        <Slider><SliderFill /></Slider>
        <Line $top={2}><T $color="#aaa49f" $ls={-0.4}>Always</T></Line>
        <Line $top={7}><B>Friendly name</B></Line>
        <Line $h={21} $top={3}><Entry $w={280}>Dell Wireless 360 Bluetooth Module</Entry></Line>
      </TabPage>
      <ButtonRow $m="7px 12px 0 0"><CloseButton /></ButtonRow>
    </Win>
  );
}

/* ---------- about ---------- */
const About = styled.div`display: flex; flex-direction: column; align-items: center; padding-top: 13px;`;
const AppTitle = styled.h1`margin: 7px 0 3px; font-size: 20px; line-height: 28px; font-weight: 700; letter-spacing: -.15px;`;
const Copy = styled.div`font-size: 9.5px; line-height: 12px; letter-spacing: ${p => p.$ls}px;`;
const Link = styled.a`line-height: 20px; margin-top: 6px; text-decoration: underline; text-underline-offset: 3px; letter-spacing: .17px;`;

function AboutWindow() {
  return (
    <Win x={1120} y={583} w={297} h={257}>
      <About>
        <BtLogo h={47} />
        <AppTitle>Blueman applet 1.21</AppTitle>
        <Line><T $ls={-0.09}>Blueman is a GTK based Bluetooth manager</T></Line>
        <Line $h={5} />
        <Copy $ls={0.38}>Copyright © 2008 Valmantas Palikša</Copy>
        <Copy $ls={0.3}>Copyright © 2008 Tadas Dailyda</Copy>
        <Link>http://blueman-project.org</Link>
        <ButtonRow $m="9px 0 0" $gap={6}>
          <Button $w={85} $gap={2}><Star /><T $ls={0.2}>Credits</T></Button>
          <Button $w={85} $gap={2}><Puzzle s={16} />Plugins</Button>
          <CloseButton />
        </ButtonRow>
      </About>
    </Win>
  );
}

/* ---------- manager ---------- */
const MenuBar = styled.div`height: 16px; border-bottom: 1px solid ${C.line}; display: flex; padding-left: 5px; gap: 9.500px; line-height: 16px; flex: none;`;
const ToolBar = styled.div`height: 37px; border-bottom: 1px solid ${C.line}; display: flex; align-items: center; flex: none;`;
const Sep = styled.div`width: 1px; height: ${p => p.$h}px; background: ${C.line}; margin: 0 ${p => p.$mr || 0}px 0 ${p => p.$ml || 0}px; flex: none;`;
const DeviceRow = styled.div`height: 55px; background: ${C.sel}; display: flex; flex: none; color: ${C.field};`;
const DeviceIcon = styled.div`width: 57px; position: relative; padding: 6px 0 0 17px;`;
const Emblem = styled.div`position: absolute; left: 2px; top: ${p => p.$y}px;`;
const DeviceInfo = styled.div`display: flex; flex-direction: column;`;
const StatusBar = styled.div`height: 17px; margin-top: 4px; border-top: 1px solid ${C.line}; display: flex; align-items: center; padding-left: 40px; white-space: pre; font-size: 10.5px; flex: none; overflow: hidden;`;
const DeviceName = styled.div`font-size: 16.500px; line-height: 20px; margin-top: 5px; font-weight: 300; letter-spacing: .3px;`;
const Small = styled.div`font-size: 10px; line-height: 14px; color: #3a3230;`;
const Address = styled.div`font-size: 11px; line-height: 13px; font-style: italic; letter-spacing: .85px;`;

function ManagerWindow() {
  return (
    <Win x={123} y={147} w={285} h={165} max active>
      <MenuBar><T $ls={0.1}>Adapter</T><T>Device</T><T $ls={0.2}>View</T><T>Help</T></MenuBar>
      <ToolBar>
        <Cell $w={40}><Search /></Cell><Sep $h={22} $mr={7} $ml={1} />
        <Cell $w={33}><Plus s={21} off /></Cell><Cell $w={34}><Keys /></Cell><Cell $w={34}><Star4 s={23} /></Cell>
        <Cell $w={34}><Gear s={23} /></Cell><Cell $w={34}><Forbid s={23} /></Cell>
        <Sep $h={22} $ml={5} $mr={32} /><Icon w={10} h={5}><path d="M0 0h10L5 5z" fill="#5b4f4d" /></Icon>
      </ToolBar>
      <DeviceRow>
        <DeviceIcon><Phone w={23} h={43} /><Emblem $y={4}><Key s={17} color="#9b9d98" /></Emblem><Emblem $y={35}><Star4 s={16} fill="#ffe95a" stroke="#c9a21a" /></Emblem></DeviceIcon>
        <DeviceInfo><DeviceName>SAMSUNG-SGH-I257</DeviceName><Small>Smart phone</Small><Address>A8:7C:01:E8:A9:9F</Address></DeviceInfo>
      </DeviceRow>
      <StatusBar><Arrow /><T $ls={-0.1}>{' 6.02 KB  '}</T><T $italic $ls={-0.15}>{'0.00 B/s '}</T><Arrow down /><T>{' 950.64 KB'}</T></StatusBar>
    </Win>
  );
}

/* ---------- local services ---------- */
const Columns = styled.div`display: flex; padding: ${p => p.$top || 7}px 0 0 ${p => p.$left || 7}px; flex: none;`;
const SideList = styled.div`width: 120px; height: 363px; border: 1px solid ${C.line}; border-radius: 2px; flex: none;`;
const SideItem = styled.div`height: 34px; display: flex; align-items: center; padding-left: 3px; gap: 7px; background: ${p => (p.$on ? C.sel : 'transparent')}; color: ${C.field};`;
const Settings = styled.div`margin-left: 12px; padding-top: 8px; display: flex; flex-direction: column; flex: 1; overflow: hidden;`;
const Support = styled.div`display: flex; margin-top: 12px; flex: none;`;
const SupportCol = styled.div`width: ${p => p.$w}px; margin-left: ${p => p.$ml}px;`;

function ServicesWindow() {
  return (
    <Win x={26} y={403} w={526} h={456} max>
      <Columns>
        <SideList>
          <SideItem $on><Folder net /><T $ls={0.2}>Network</T></SideItem>
          <SideItem><Folder green /><T $ls={0.15}>Transfer</T></SideItem>
        </SideList>
        <Settings>
          <Line $h={30} $gap={7}><Folder net /><B>Network Settings</B></Line>
          <Line $in={13} $top={8}><B>Services</B></Line>
          <Line $in={24}><Ck on>Group Network</Ck></Line>
          <Line $in={24} $top={1}><Ck on ls={0.1}>Network Access Point (NAP)</Ck></Line>
          <Line $in={13} $top={12}><B $ls={0.2}>NAP Settings</B></Line>
          <Line $in={22} $top={2}><T>DHCP server type:</T><Line $in={8} $gap={7}><Rd dark>dhcpd3</Rd><Option><RadioDot $on /><B>dnsmasq</B></Option></Line></Line>
          <Line $in={22} $h={21} $top={2} $gap={44}><T>IP Address:</T><Entry $w={240} $ls={0.1}>169.254.1.1</Entry></Line>
          <Line $in={24} $top={3}><Ck>Enable Routing (NAT)</Ck></Line>
          <Support>
            <SupportCol $w={144} $ml={13}>
              <Line><B>PAN Support</B></Line>
              <Line $in={11}><Rd on ls={-0.05}>NetworkManager</Rd></Line>
              <Line $in={11} $top={1}><Rd>Blueman (dhclient)</Rd></Line>
            </SupportCol>
            <Sep $h={61} />
            <SupportCol $w={160} $ml={8}>
              <Line><B>DUN Support</B></Line>
              <Line $in={11}><Rd on ls={-0.05}>NetworkManager</Rd></Line>
              <Line $in={11} $top={1}><Rd ls={-0.1}>Blueman</Rd></Line>
            </SupportCol>
          </Support>
        </Settings>
      </Columns>
      <ButtonRow $m="11px 12px 0 0" $gap={6}><Button $w={85} $dark><BigCheck /><T>Apply</T></Button><CloseButton /></ButtonRow>
    </Win>
  );
}

/* ---------- plugins ---------- */
const PluginList = styled.div`width: 142px; height: 326px; border: 1px solid ${C.line}; overflow: hidden; flex: none;`;
const PluginRows = styled.div`margin-top: -12px;`;
const PluginRow = styled.div`height: 21px; display: flex; align-items: center; padding-left: ${p => (p.$plain ? 22 : 4)}px; gap: 5px; background: ${p => (p.$on ? C.sel : 'transparent')}; color: ${C.field}; white-space: nowrap;`;
const PluginIcon = styled.div`width: 18px; display: flex; justify-content: center;`;
const ScrollBar = styled.div`width: 14px; height: 326px; margin-left: 3px; display: flex; flex-direction: column; flex: none; border: 1px solid #d5d2cd;`;
const ScrollStep = styled.div`height: 14px; margin: ${p => (p.$dark ? '0 -1px -1px' : 0)}; background: ${p => (p.$dark ? C.dark : C.bg)}; border-bottom: 1px solid #d5d2cd; display: flex; align-items: center; justify-content: center; flex: none;`;
const Trough = styled.div`height: 91px; background: #ecebe6; border-bottom: 1px solid #d5d2cd;`;
const Thumb = styled.div`flex: 1; display: flex; align-items: center; justify-content: center;`;
const Grip = styled.div`width: 7px; height: 18px; margin-bottom: 2px; background: radial-gradient(circle, #c9c7c2 30%, transparent 34%) 0 0 / 3px 3px;`;
const Details = styled.div`margin-left: 9px; width: 370px; display: flex; flex-direction: column;`;
const DetailHead = styled.div`display: flex; height: 27px; align-items: center;`;
const HRule = styled.div`height: 1px; margin: 0 7px 5px 8px; background: ${C.line}; flex: none;`;

const PLUGINS = [
  ['NMDUNSupport', Modem, 1, 0.1], ['NMIntegration', Modem, 0], ['NMMonitor', NetFolder, 1, 0.1], ['NMPANSupport', NetFolder, 1, -0.15], ['NetUsage', Wifi, 0],
  ['Networking', NetFolder, 1], ['PPPSupport', Modem, 0], ['PulseAudio', SoundCard, 1, -0.2], ['RecentConns', Clock, 1, 0.25], ['SerialManager', Serial, 1, -0.2],
  ['TransferService', Plane, 1, 0.08], ['DBusService', Puzzle], ['Menu', MenuIcon], ['PowerManager', Puzzle, undefined, -0.15], ['StandardItems', Puzzle, undefined, -0.1], ['StatusIcon', Puzzle, undefined, 0.1],
];

function PluginsWindow() {
  return (
    <Win x={526} y={401} w={569} h={416} max>
      <Columns $top={8} $left={8}>
        <PluginList>
          <PluginRows>
            {PLUGINS.map(([name, I, on, ls]) => (
              <PluginRow key={name} $plain={on === undefined} $on={name === 'DBusService'}>
                {on !== undefined && <CheckBox>{!!on && <Check />}</CheckBox>}
                <PluginIcon><I /></PluginIcon><T $ls={ls}>{name}</T>
              </PluginRow>
            ))}
          </PluginRows>
        </PluginList>
        <ScrollBar>
          <ScrollStep><Icon w={8} h={4}><path d="M0 4h8L4 0z" fill="#bbb6b0" /></Icon></ScrollStep>
          <Trough /><Thumb><Grip /></Thumb>
          <ScrollStep $dark><Icon w={8} h={5}><path d="M0 0h8L4 5z" fill="#eee" /></Icon></ScrollStep>
        </ScrollBar>
        <Details>
          <DetailHead><Puzzle s={25} /><Line $in={10}><B $ls={0.1}>DBusService</B></Line><Spacer /><Button $w={106} $dark $gap={2}><Tools /><T $ls={-0.1}>Configuration</T></Button></DetailHead>
          <Line $top={9}><B $ls={0.05}>Plugin description:</B></Line>
          <Line $top={7}><T $ls={-0.04}>Provides DBus API for other Blueman components</T></Line>
          <Line $top={7}><B>Author:</B></Line>
          <Line $top={7}><T>Walmis</T></Line>
          <Line $top={7}><B>Depends on:</B></Line>
          <Line $top={7}><T $ls={0.1}>StatusIcon</T></Line>
        </Details>
      </Columns>
      <HRule />
      <ButtonRow $m="0 13px 0 0"><CloseButton /></ButtonRow>
    </Win>
  );
}

/* ---------- popup menu ---------- */
const Popup = styled.div`position: absolute; left: 321px; top: 263px; width: 161px; height: 210px; background: #fff; border: 1px solid #d6d4d0;`;
const PopupHead = styled.div`height: 17px; padding: 3px 0 0 26px; line-height: 15px; color: #a49c99;`;
const PopupItem = styled.div`
  height: 21px; margin: 0 2px; padding-left: 2px; display: flex; align-items: center; gap: 5px; border: 1px solid ${p => (p.$on ? '#8f9a7a' : 'transparent')};
  background: ${p => (p.$on ? '#cbd4b9' : 'transparent')}; color: ${p => (p.$off ? '#b9b3af' : p.$on ? C.field : C.text)}; border-radius: 2px;
`;
const Tooltip = styled.div`position: absolute; left: 471px; top: 306px; width: 245px; height: 16px; border: 1px solid #000; background: #becd9a; line-height: 14px; white-space: nowrap; letter-spacing: -.01px; color: #5c5a48;`;
const Pointer = styled.div`position: absolute; left: 447px; top: 290px;`;

function ContextMenu() {
  return (
    <Popup>
      <PopupHead><B $ls={0.25}>Connect To:</B></PopupHead>
      <PopupItem $on><Headset /><T $ls={-0.1}>Audio Source</T></PopupItem>
      <PopupItem><Docs /><T $ls={-0.15}>Send a file...</T></PopupItem>
      <PopupItem><Folder w={16} green /><T $ls={0.03}>Browse device...</T></PopupItem>
      <PopupItem $off><Key /><T>Pair</T></PopupItem>
      <PopupItem><Star4 /><T $ls={0.15}>Untrust</T></PopupItem>
      <PopupItem><Gear /><T>Setup...</T></PopupItem>
      <PopupItem><Refresh /><T $ls={0.07}>Refresh Services</T></PopupItem>
      <PopupItem><Forbid /><T $ls={-0.1}>Remove...</T></PopupItem>
      <PopupItem $off><Disc /><T $ls={0.27}>Disconnect Device</T></PopupItem>
    </Popup>
  );
}

/* ---------- desktop items ---------- */
const Item = styled.div`
  position: absolute; left: ${p => p.$cx - 60}px; top: ${p => p.$y}px; width: 120px; display: flex; flex-direction: column; align-items: center;
  color: #000; text-shadow: 1px 1px 0 rgba(0, 0, 0, .12); line-height: 15px; text-align: center; white-space: pre-line; gap: ${p => p.$gap || 3}px;
`;
const Fragment = styled.div`position: absolute; left: ${p => p.$x}px; top: ${p => p.$y - 8}px; color: #000; text-shadow: 1px 1px 0 rgba(0, 0, 0, .12);`;
const FilePage = styled.div`
  width: 24px; height: ${p => p.$h || 29}px; background: linear-gradient(225deg, #fff 5px, #ececec 5px, #dcdcdc); border: 1px solid #ccc; border-bottom-color: #aaa; overflow: hidden;
  font: bold 8px/10px "DejaVu Sans Mono", monospace; color: #000; white-space: pre; padding: 2px 0 0 1px; text-align: left; text-shadow: none; margin-right: ${p => p.$mr || 0}px;
`;
const FileSpot = styled.div`position: absolute; left: ${p => p.$x}px; top: ${p => p.$y}px;`;
const Lock = () => <Icon w={16} h={17}><path d="M4 8V5a4 4 0 0 1 8 0v3" fill="none" stroke="#8f918c" strokeWidth="2.800" /><path d="M4 8V5a4 4 0 0 1 8 0v3" fill="none" stroke="#e4e4e0" strokeWidth="1.200" /><rect x="1" y="7.500" width="14" height="8.500" rx="1" fill="#e2e2de" stroke="#8f918c" /></Icon>;

const FILES = [[567, 41, '# c\n# c\n#', 587, 32], [671, 41, '# c\nfro\nimp', 691, 32], [775, 53, '/us\n/us', 795, 45], [879, 41, 'imp\nfro'], [983, 41, "#!'\n\nimp"]];
const KeyRows = () => (
  <Icon w={55} h={70}>
    <rect x=".5" y=".5" width="54" height="69" rx="2" fill="#fff" stroke="#b5b5b3" />
    <rect x="4" y="4" width="31" height="62" rx="2" fill="#e2e2e0" />
    <path d="M34 30h8l5 2v11l-5 2h-8z" fill="#c9c9c8" />
    <rect x="5.500" y="6" width="6" height="26" fill="#fafafa" stroke="#777" strokeWidth=".6" /><rect x="8" y="33" width="4" height="30" fill="#fafafa" stroke="#777" strokeWidth=".6" />
    <g fill="#fcfcfc" stroke="#8a8a88" strokeWidth=".6">{Array.from({ length: 11 }, (_, r) => [0, 1, 2, 3].map(c => <rect key={`${r}-${c}`} x={12 + c * 4.5} y={6 + r * 5.2} width="4.500" height="5.200" />))}</g>
    <path d="M27 7h4v3h-4zM27 18h4v4h-4zM30.500 31h3v7h-3z" fill="#111" /><rect x="22" y="37" width="1.500" height="1.500" fill="#33f" />
  </Icon>
);

function Desktop() {
  return (
    <>
      <Item $cx={59.5} $y={39} $gap={2}>
        <Icon w={70} h={46}><rect x=".5" y=".5" width="69" height="45" rx="2" fill="#fff" stroke="#b5b5b0" /><rect x="3" y="3" width="61" height="40" fill="#f0f1ec" /><rect x="19" y="10" width="45" height="24" fill="#2d3436" /><path d="M22 13h12M22 17h9M22 20h10" stroke="#4d5653" /><path d="M22 26h30" stroke="#6b6a3c" /><path d="M5 6h7M5 10h6M5 14h8M5 18h6M5 22h6" stroke="#e8cfcb" /><path d="M19 9h45" stroke="#a9b58c" strokeWidth="2" /><path d="M20 37h20M20 40h14" stroke="#c9dcae" /></Icon>
        <T>{'localAdapterIsD\neviceShowInCell\nRenderer.png'}</T>
      </Item>
      <Item $cx={267} $y={38} $gap={3}><Folder /><T>applets</T></Item>
      <Item $cx={373} $y={40} $gap={2}><Usb w={16} h={32} /><T>{'blueman-\ndevice.svg'}</T></Item>
      <Item $cx={165} $y={93} $gap={3}><FilePage $h={31} $mr={4}>{'#\n#  A\n#  I'}</FilePage><T>kernelconfig</T></Item>
      <Item $cx={59.5} $y={150} $gap={5}>
        <Icon w={25} h={25}><circle cx="12.500" cy="12.500" r="12" fill="#3a3835" /><circle cx="12.500" cy="12.500" r="7.500" fill="#d7d6d2" /><path d="M12.500 5v15M5 12.500h15M7.200 7.200l10.600 10.600M17.800 7.200L7.200 17.800" stroke="#3a3835" strokeWidth="1.300" /><circle cx="12.500" cy="12.500" r="2.500" fill="#666" /></Icon>
        <T>{'drive-harddisk.\nsvg'}</T>
      </Item>
      <Item $cx={60.5} $y={230} $gap={6}><Icon w={14} h={11}><path d="M5 3V.5h4V3" fill="none" stroke="#777" /><rect x=".5" y="3" width="13" height="7.500" rx="1" fill="#9a9590" stroke="#6f6a66" /><path d="M2 5h10M2 7h10" stroke="#c9c5c0" /></Icon><T $ls={0.15}>{'preferences-\ndesktop-\nkeyboard.svg'}</T></Item>
      <Item $cx={59.5} $y={308} $gap={2}><KeyRows /><T>keyboard.svg</T></Item>
      <Fragment $x={17} $y={485}>D</Fragment><Fragment $x={17} $y={577}>par</Fragment><Fragment $x={12} $y={748}>pan</Fragment>
      <Fragment $x={20} $y={845}>d</Fragment><Fragment $x={48} $y={859}>3.pdf</Fragment>
      {FILES.map(([x, y, text, lx, ly]) => (
        <React.Fragment key={x}>
          <FileSpot $x={x} $y={y}><FilePage>{text}</FilePage></FileSpot>
          {lx && <FileSpot $x={lx} $y={ly}><Lock /></FileSpot>}
        </React.Fragment>
      ))}
    </>
  );
}

export default function App() {
  return (
    <Screen>
      <Global />
      <Surface>
        <Desktop />
        <AdapterWindow />
        <ManagerWindow />
        <ServicesWindow />
        <PluginsWindow />
        <LocalWindow />
        <AboutWindow />
        <ContextMenu />
        <Tooltip>Allows to receive audio from remote device</Tooltip>
        <Pointer><Cursor /></Pointer>
      </Surface>
      <TopPanel />
      <BottomPanel />
    </Screen>
  );
}
